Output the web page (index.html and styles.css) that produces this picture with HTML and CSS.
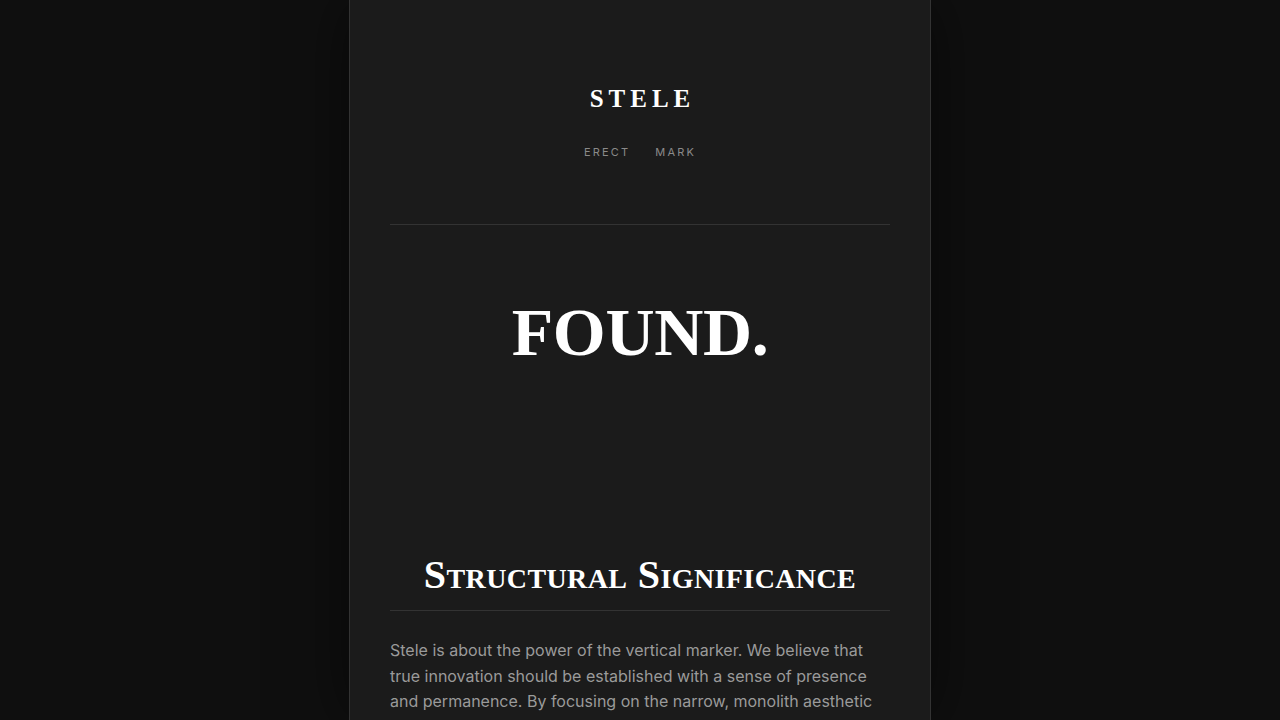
FILE: index.html
```html
<!DOCTYPE html>
<html lang="en">
<head>
<meta charset="utf-8">
<title>Stele</title>
<link rel="stylesheet" href="styles.css">
</head>
<body>
<div class="column">
  <header class="masthead">
    <div class="logo">STELE</div>
    <nav class="nav">
      <a href="#">ERECT</a>
      <a href="#">MARK</a>
    </nav>
  </header>
  <hr class="rule">
  <section class="hero">
    <h1 class="hero-title">FOUND.</h1>
  </section>
  <section class="section">
    <h2 class="section-title">Structural Significance</h2>
    <hr class="rule">
    <p class="body-text">Stele is about the power of the vertical marker. We believe that true innovation should be established with a sense of presence and permanence. By focusing on the narrow, monolith aesthetic we create structures that endure.</p>
  </section>
</div>
</body>
</html>
```

FILE: styles.css
```css
html, body {
  margin: 0;
  padding: 0;
  background: #0f0f0f;
  height: 100%;
  overflow: hidden;
}
body {
  display: flex;
  justify-content: center;
  font-family: "Inter", "Liberation Sans", sans-serif;
}
.column {
  width: 500px;
  padding: 0 40px;
  background: #1b1b1b;
  border-left: 1px solid #333;
  border-right: 1px solid #333;
  min-height: 100%;
  box-shadow: 0 0 60px rgba(0,0,0,0.5);
}
.masthead {
  padding-top: 84px;
  padding-bottom: 65px;
  text-align: center;
}
.logo {
  font-family: "Liberation Serif", serif;
  font-weight: bold;
  font-size: 25px;
  letter-spacing: 0.2em;
  color: #fff;
  line-height: 30px;
  padding-left: 0.2em;
}
.nav {
  margin-top: 31px;
  display: flex;
  justify-content: center;
  gap: 25px;
}
.nav a {
  font-size: 11px;
  letter-spacing: 0.2em;
  color: #8a8a8a;
  text-decoration: none;
  line-height: 14px;
}
.rule {
  border: 0;
  border-top: 1px solid #333;
  margin: 0;
}
.hero {
  padding-top: 68px;
  padding-bottom: 182px;
  text-align: center;
}
.hero-title {
  margin: 0;
  font-family: "Liberation Serif", serif;
  font-weight: bold;
  font-size: 68px;
  line-height: 78px;
  color: #fff;
  letter-spacing: -0.005em;
}
.section-title {
  margin: 0 0 13px;
  text-align: center;
  font-family: "Liberation Serif", serif;
  font-weight: bold;
  font-variant: small-caps;
  font-size: 40px;
  line-height: 44px;
  color: #fff;
  letter-spacing: 0.01em;
}
.body-text {
  margin: 27px 0 0;
  font-size: 16px;
  line-height: 25.6px;
  color: #9a9a9a;
}
```
